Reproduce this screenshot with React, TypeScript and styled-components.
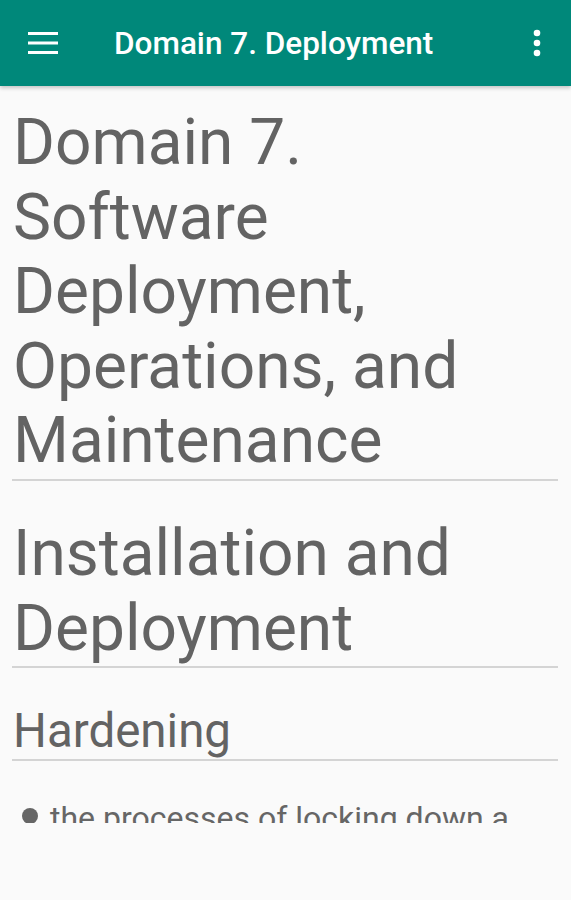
import styled, { createGlobalStyle } from 'styled-components'

const Global = createGlobalStyle`
	html, body {
		margin: 0;
		padding: 0;
		background: #fafafa;
		font-family: Roboto, 'Noto Sans', sans-serif;
	}
`

const MenuIcon = () => (
	<svg width="30" height="24" viewBox="0 0 30 24">
		<rect x="0" y="1" width="30" height="3" fill="#fff" />
		<rect x="0" y="10.5" width="30" height="3" fill="#fff" />
		<rect x="0" y="20" width="30" height="3" fill="#fff" />
	</svg>
)

const MoreIcon = () => (
	<svg width="8" height="28" viewBox="0 0 8 28">
		<circle cx="4" cy="4" r="3.3" fill="#fff" />
		<circle cx="4" cy="14" r="3.3" fill="#fff" />
		<circle cx="4" cy="24" r="3.3" fill="#fff" />
	</svg>
)

export default function App() {
	return (
		<>
			<Global />
			<Page>
				<Toolbar>
					<IconButton>
						<MenuIcon />
					</IconButton>
					<Title>Domain 7. Deployment</Title>
					<IconButton narrow>
						<MoreIcon />
					</IconButton>
				</Toolbar>
				<Content>
					<Heading size={64} lines={74.6}>
						Domain 7. Software Deployment, Operations, and Maintenance
					</Heading>
					<Heading size={64} lines={74.6} gap={36}>
						Installation and Deployment
					</Heading>
					<Heading size={47.5} lines={56} gap={35}>
						Hardening
					</Heading>
					<List>
						<Item>the processes of locking down a system</Item>
					</List>
				</Content>
			</Page>
		</>
	)
}

const Page = styled.div`
	display: flex;
	flex-direction: column;
	min-height: 900px;
	background: #fafafa;
`
const Toolbar = styled.header`
	display: flex;
	align-items: center;
	height: 86px;
	padding: 0 28px 0 28px;
	box-sizing: border-box;
	background: #00887a;
	box-shadow: 0 2px 4px rgba(0, 0, 0, 0.22);
	position: relative;
	z-index: 1;
`
const IconButton = styled.div<{ narrow?: boolean }>`
	display: flex;
	align-items: center;
	justify-content: center;
	width: ${(p) => (p.narrow ? '12px' : '30px')};
	height: 40px;
`
const Title = styled.h1`
	flex: 1;
	margin: 0 0 0 56px;
	font-size: 31.5px;
	font-weight: 500;
	color: #fff;
`
const Content = styled.main`
	height: 737px;
	overflow: hidden;
	padding: 20px 13px 0 12px;
	box-sizing: border-box;
`
const Heading = styled.h2<{ size: number; lines: number; gap?: number }>`
	margin: ${(p) => p.gap ?? 0}px 0 0 0;
	padding: 0 0 0 1px;
	font-size: ${(p) => p.size}px;
	line-height: ${(p) => p.lines}px;
	font-weight: 400;
	color: #636363;
	border-bottom: 2px solid #d4d4d4;
`
const List = styled.ul`
	list-style: none;
	margin: 39px 0 0 0;
	padding: 0 0 0 10px;
`
const Item = styled.li`
	display: flex;
	align-items: flex-start;
	gap: 12px;
	font-size: 32px;
	line-height: 36px;
	color: #666;

	&::before {
		content: '';
		flex: none;
		width: 16px;
		height: 16px;
		margin-top: 8px;
		border-radius: 50%;
		background: #666;
	}
`
